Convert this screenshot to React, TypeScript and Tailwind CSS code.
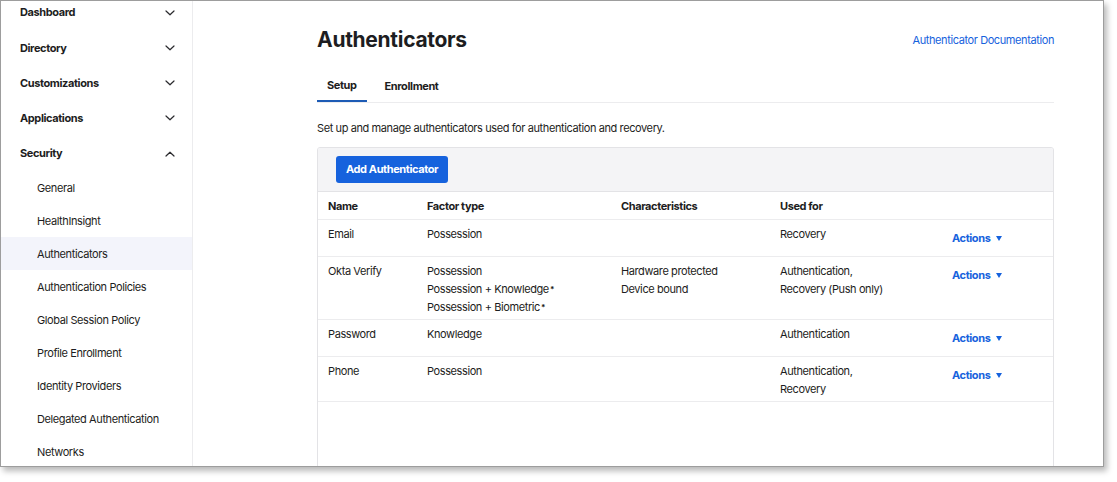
import React from 'react'

type NavItem = { label: string; open?: boolean }

const TOP_NAV: NavItem[] = [
  { label: 'Dashboard' },
  { label: 'Directory' },
  { label: 'Customizations' },
  { label: 'Applications' },
  { label: 'Security', open: true },
]

const SECURITY_ITEMS = [
  'General',
  'HealthInsight',
  'Authenticators',
  'Authentication Policies',
  'Global Session Policy',
  'Profile Enrollment',
  'Identity Providers',
  'Delegated Authentication',
  'Networks',
]

type Row = {
  name: string
  factor: React.ReactNode[]
  chars: string[]
  usedFor: string[]
}

const Star = () => <sup className="text-[8px] font-bold relative -top-[1px] ml-px">*</sup>

const ROWS: Row[] = [
  { name: 'Email', factor: ['Possession'], chars: [], usedFor: ['Recovery'] },
  {
    name: 'Okta Verify',
    factor: [
      'Possession',
      <>Possession + Knowledge<Star /></>,
      <>Possession + Biometric<Star /></>,
    ],
    chars: ['Hardware protected', 'Device bound'],
    usedFor: ['Authentication,', 'Recovery (Push only)'],
  },
  { name: 'Password', factor: ['Knowledge'], chars: [], usedFor: ['Authentication'] },
  { name: 'Phone', factor: ['Possession'], chars: [], usedFor: ['Authentication,', 'Recovery'] },
]

function Chevron({ up }: { up?: boolean }) {
  return (
    <svg width="10" height="6" viewBox="0 0 10 6" className="text-[#2a2a2e]">
      <path
        d={up ? 'M1 5 L5 1.2 L9 5' : 'M1 1 L5 4.8 L9 1'}
        fill="none"
        stroke="currentColor"
        strokeWidth="1.2"
        strokeLinecap="round"
        strokeLinejoin="round"
      />
    </svg>
  )
}

function Sidebar() {
  return (
    <aside className="w-[192px] shrink-0 border-r border-[#ececee] h-full overflow-hidden tracking-[-0.4px]">
      <div className="-mt-[6px]">
        {TOP_NAV.map(item => (
          <div key={item.label} className="h-[35.25px] flex items-center justify-between pl-[19px] pr-[17px]">
            <span className="text-[11px] font-bold text-[#1d1d21]">{item.label}</span>
            <Chevron up={item.open} />
          </div>
        ))}
        {SECURITY_ITEMS.map(label => (
          <div
            key={label}
            className={`h-[33px] flex items-center pl-[36px] text-[11px] text-[#1d1d21] ${
              label === 'Authenticators' ? 'bg-[#f3f4fb]' : ''
            }`}
          >
            {label}
          </div>
        ))}
      </div>
    </aside>
  )
}

function Actions() {
  return (
    <button className="h-[28px] -mt-[1px] mb-[1px] flex items-center gap-[6px] text-[11px] font-bold text-[#1662dd] tracking-[-0.4px]">
      Actions
      <svg width="6" height="5" viewBox="0 0 6 5">
        <path d="M0 0 H6 L3 5 Z" fill="#1662dd" />
      </svg>
    </button>
  )
}

function Lines({ items }: { items: React.ReactNode[] }) {
  return (
    <>
      {items.map((t, i) => (
        <div key={i} className="leading-[18px]">{t}</div>
      ))}
    </>
  )
}

const cell = 'pl-[10px] pt-[5px] pb-[3px] border-b border-[#ececee]'

function AuthTable() {
  return (
    <div className="border border-[#e3e3e6] rounded-t-[3px] overflow-hidden">
      <div className="h-[44px] bg-[#f4f4f6] border-b border-[#e3e3e6] flex items-center pl-[18px]">
        <button className="h-[27px] px-[10px] rounded-[3px] bg-[#1662dd] text-white text-[11px] font-bold">
          Add Authenticator
        </button>
      </div>
      <div className="grid grid-cols-[99px_194px_159px_172px_1fr] text-[11px] text-[#1d1d21]">
        {['Name', 'Factor type', 'Characteristics', 'Used for', ''].map((h, i) => (
          <div key={i} className="h-[28px] pt-[2px] flex items-center pl-[10px] font-bold border-b border-[#ececee]">
            {h}
          </div>
        ))}
        {ROWS.map(r => (
          <React.Fragment key={r.name}>
            <div className={cell}>
              <Lines items={[r.name]} />
            </div>
            <div className={cell}>
              <Lines items={r.factor} />
            </div>
            <div className={cell}>
              <Lines items={r.chars} />
            </div>
            <div className={cell}>
              <Lines items={r.usedFor} />
            </div>
            <div className={cell}>
              <Actions />
            </div>
          </React.Fragment>
        ))}
      </div>
      <div className="h-[80px]" />
    </div>
  )
}

export default function App() {
  return (
    <div
      className="w-[1117px] h-[482px] bg-white"
      style={{ fontFamily: 'Inter, "Noto Sans", sans-serif' }}
    >
      <div className="w-[1104px] h-[467px] border border-[#9d9d9d] shadow-[3px_4px_6px_rgba(0,0,0,0.28)] flex overflow-hidden bg-white">
        <Sidebar />
        <main className="flex-1 pl-[124px] pr-[49px] pt-[25px] text-[#1d1d21] tracking-[-0.4px]">
          <div className="flex items-center justify-between h-[28px]">
            <h1 className="text-[21px] font-bold tracking-[-0.3px]">Authenticators</h1>
            <a className="text-[11px] text-[#1662dd]">Authenticator Documentation</a>
          </div>
          <div className="mt-[22px] flex border-b border-[#ececee]">
            <div className="px-[10px] h-[26px] pb-[6px] flex items-center text-[11px] font-bold border-b-2 border-[#1d5bb5] -mb-px">
              Setup
            </div>
            <div className="px-[18px] h-[26px] pb-[6px] flex items-center text-[11px] font-bold">Enrollment</div>
          </div>
          <p className="mt-[17px] text-[11px] leading-[17px]">
            Set up and manage authenticators used for authentication and recovery.
          </p>
          <div className="mt-[10px]">
            <AuthTable />
          </div>
        </main>
      </div>
    </div>
  )
}
